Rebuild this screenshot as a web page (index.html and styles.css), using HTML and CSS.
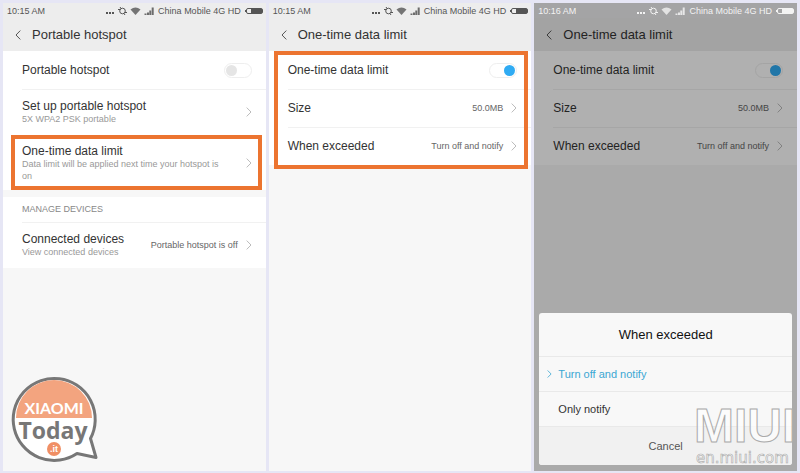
FILE: index.html
```html
<!DOCTYPE html>
<html lang="en">
<head>
  <meta charset="UTF-8" />
  <meta name="viewport" content="width=device-width, initial-scale=1.0" />
  <title>Portable hotspot - One-time data limit</title>
  <link rel="stylesheet" href="styles.css">
</head>
<body>

<!-- shared icons -->
<svg class="defs" width="0" height="0">
  <symbol id="status-icons" viewBox="0 0 48 10">
    <g fill="currentColor">
      <rect x="0" y="6" width="2" height="2"/>
      <rect x="3" y="6" width="2" height="2"/>
      <rect x="6" y="6" width="2" height="2"/>
      <path d="M24.500 3.600Q29.500 -.4 34.500 3.600L29.500 9z" opacity=".8"/>
      <path d="M38.500 9v-1.500h2V9zM41 9V6.500h2V9zM43.300 9V4.500h1.900V9zM45.700 9V1.500h2V9z" opacity=".85"/>
    </g>
    <g fill="none" stroke="currentColor">
      <circle cx="16.500" cy="5" r="2.800"/>
      <path d="M12 3.500h2.500M18.500 6.500h2.500M14 1l1 1.500M19 9l-1-1.500"/>
    </g>
  </symbol>
  <symbol id="battery" viewBox="0 0 18 6">
    <rect x="1.500" y=".5" width="16" height="5" rx="1.500" fill="none" stroke="currentColor"/>
    <rect x="6" y="1" width="11" height="4" fill="currentColor"/>
    <rect x="0" y="2" width="1" height="2" fill="currentColor"/>
  </symbol>
  <symbol id="back" viewBox="0 0 6 10">
    <path d="M5.300 .6L1 5l4.300 4.400" fill="none" stroke="currentColor"/>
  </symbol>
  <symbol id="next" viewBox="0 0 6 10">
    <path d="M.7 .6L5 5 .7 9.400" fill="none" stroke="currentColor"/>
  </symbol>
</svg>

<main class="screens">

  <section class="phone">
    <div class="status">
      <span class="time">10:15 AM</span>
      <svg class="status-icons"><use href="#status-icons"/></svg>
      <span>China Mobile 4G HD</span>
      <svg class="battery"><use href="#battery"/></svg>
    </div>
    <header class="title-bar">
      <button class="back" aria-label="Back"><svg class="arrow"><use href="#back"/></svg></button>
      <h1>Portable hotspot</h1>
    </header>
    <div class="list">
      <div class="row">
        <label class="name" for="hotspot">Portable hotspot</label>
        <input class="switch" type="checkbox" id="hotspot">
      </div>
      <button class="row tall">
        <span class="name">Set up portable hotspot<small>5X WPA2 PSK portable</small></span>
        <svg class="arrow"><use href="#next"/></svg>
      </button>
      <button class="row taller marked">
        <span class="name">One-time data limit<small>Data limit will be applied next time your hotspot is on</small></span>
        <svg class="arrow"><use href="#next"/></svg>
      </button>
    </div>
    <div class="list spaced">
      <h2>MANAGE DEVICES</h2>
      <button class="row tall">
        <span class="name">Connected devices<small>View connected devices</small></span>
        <span class="value">Portable hotspot is off</span>
        <svg class="arrow"><use href="#next"/></svg>
      </button>
    </div>

    <svg class="logo" viewBox="0 0 88 88" role="img" aria-label="Xiaomi Today .it">
      <path d="M80.500 62.500A41 41 0 1 0 67 77.500L86 81.500z" fill="#fff" stroke="#777" stroke-width="3" stroke-linejoin="round"/>
      <path d="M6 42A38 38 0 0 1 82 42z" fill="#f3a47f"/>
      <text class="logo-top" x="44" y="38">XIAOMI</text>
      <text class="logo-name" x="43" y="63">Today</text>
      <circle cx="44" cy="73" r="7" fill="#f08f65"/>
      <text class="logo-it" x="44" y="76">.it</text>
    </svg>
  </section>

  <section class="phone">
    <div class="status">
      <span class="time">10:15 AM</span>
      <svg class="status-icons"><use href="#status-icons"/></svg>
      <span>China Mobile 4G HD</span>
      <svg class="battery"><use href="#battery"/></svg>
    </div>
    <header class="title-bar">
      <button class="back" aria-label="Back"><svg class="arrow"><use href="#back"/></svg></button>
      <h1>One-time data limit</h1>
    </header>
    <div class="list marked">
      <div class="row">
        <label class="name" for="limit">One-time data limit</label>
        <input class="switch" type="checkbox" id="limit" checked>
      </div>
      <button class="row">
        <span class="name">Size</span>
        <span class="value">50.0MB</span>
        <svg class="arrow"><use href="#next"/></svg>
      </button>
      <button class="row">
        <span class="name">When exceeded</span>
        <span class="value">Turn off and notify</span>
        <svg class="arrow"><use href="#next"/></svg>
      </button>
    </div>
  </section>

  <section class="phone dimmed">
    <div class="status">
      <span class="time">10:16 AM</span>
      <svg class="status-icons"><use href="#status-icons"/></svg>
      <span>China Mobile 4G HD</span>
      <svg class="battery"><use href="#battery"/></svg>
    </div>
    <header class="title-bar">
      <button class="back" aria-label="Back"><svg class="arrow"><use href="#back"/></svg></button>
      <h1>One-time data limit</h1>
    </header>
    <div class="list">
      <div class="row">
        <label class="name" for="limit2">One-time data limit</label>
        <input class="switch" type="checkbox" id="limit2" checked>
      </div>
      <button class="row">
        <span class="name">Size</span>
        <span class="value">50.0MB</span>
        <svg class="arrow"><use href="#next"/></svg>
      </button>
      <button class="row">
        <span class="name">When exceeded</span>
        <span class="value">Turn off and notify</span>
        <svg class="arrow"><use href="#next"/></svg>
      </button>
    </div>

    <form class="dialog" role="dialog" aria-labelledby="dialog-title">
      <h2 id="dialog-title">When exceeded</h2>
      <label class="option"><input type="radio" name="exceeded" checked><svg class="tick"><use href="#next"/></svg>Turn off and notify</label>
      <label class="option"><input type="radio" name="exceeded"><svg class="tick"><use href="#next"/></svg>Only notify</label>
      <button type="button" class="cancel">Cancel</button>
    </form>

    <svg class="watermark" viewBox="0 0 104 68">
      <text class="mark-big" x="1" y="41">MIUI</text>
      <text class="mark-small" x="3" y="62">en.miui.com</text>
    </svg>
  </section>

</main>

</body>
</html>
```
FILE: styles.css
```css
* {
  box-sizing: border-box;
}
body {
  margin: 0;
  background: #e6e6f5;
  font-family: "Liberation Sans", Arial, sans-serif;
  font-size: 12px;
  color: #333;
}
h1, h2 {
  margin: 0;
  font-weight: normal;
}
button {
  border: none;
  background: none;
  padding: 0;
  font: inherit;
  color: inherit;
  text-align: left;
  cursor: pointer;
}
.defs {
  position: absolute;
}
.screens {
  display: grid;
  grid-template-columns: repeat(3, 1fr);
  gap: 3px;
  padding: 3px 3px 2px;
  min-height: 100vh;
}
.phone {
  position: relative;
  background: #f7f7f7;
}

/* top of each screen */
.status {
  display: flex;
  align-items: center;
  gap: 4px;
  height: 15px;
  padding: 0 3px 0 4px;
  background: #ededed;
  font-size: 9px;
  color: #555;
}
.time {
  margin-right: auto;
}
.status-icons {
  width: 48px;
  height: 10px;
}
.battery {
  width: 18px;
  height: 6px;
}
.title-bar {
  display: flex;
  align-items: center;
  gap: 11px;
  height: 33px;
  padding: 0 12px;
  background: #ededed;
}
.title-bar h1 {
  font-size: 13px;
}
.arrow {
  display: block;
  flex: none;
  width: 6px;
  height: 10px;
  color: #bbb;
}
.back .arrow {
  color: #555;
}

/* settings rows */
.list {
  position: relative;
  background: #fff;
}
.spaced {
  margin-top: 7px;
}
.row {
  position: relative;
  display: flex;
  align-items: center;
  gap: 8px;
  width: 100%;
  height: 38px;
  padding: 0 14px 0 19px;
}
.row + .row::before,
.list h2 + .row::before {
  content: "";
  position: absolute;
  top: 0;
  left: 19px;
  right: 0;
  border-top: 1px solid #f1f1f1;
}
.row.marked::before {
  display: none;
}
.tall {
  height: 46px;
}
.taller {
  height: 55px;
}
.name {
  flex: 1;
  padding-right: 12px;
  line-height: 14px;
}
.row small {
  display: block;
  font-size: 9px;
  line-height: 12px;
  color: #999;
}
.value {
  font-size: 9px;
  color: #666;
}
.list h2 {
  padding: 0 19px;
  font-size: 9px;
  line-height: 25px;
  color: #888;
}
.switch {
  appearance: none;
  display: flex;
  align-items: center;
  width: 28px;
  height: 15px;
  margin: 0;
  padding: 0 1px;
  border: 1px solid #eee;
  border-radius: 8px;
  background: #fff;
}
.switch::before {
  content: "";
  width: 11px;
  height: 11px;
  border-radius: 50%;
  background: #e5e5e5;
}
.switch:checked {
  justify-content: flex-end;
}
.switch:checked::before {
  background: #2fabf3;
}

/* orange frame round the highlighted settings */
.marked::after {
  content: "";
  position: absolute;
  inset: 0 4px 0 8px;
  border: 4px solid #ec7430;
}
.list.marked::after {
  inset: 0 3px -4px 5px;
}

.logo {
  position: absolute;
  left: 7px;
  bottom: 7px;
  width: 88px;
  height: 88px;
}
.logo text {
  text-anchor: middle;
  font-weight: bold;
  fill: #fff;
}
.logo .logo-top {
  font-family: Lato, sans-serif;
  font-size: 16px;
}
.logo .logo-name {
  font-family: "Open Sans", sans-serif;
  font-size: 23px;
  fill: #777;
}
.logo .logo-it {
  font-family: "Liberation Sans", sans-serif;
  font-size: 9px;
}

/* third screen */
.dimmed::after {
  content: "";
  position: absolute;
  inset: 0;
  background: rgba(0, 0, 0, 0.31);
}
.dimmed .status {
  position: relative;
  z-index: 1;
  background: #a4a4a5;
  color: #f3f3f3;
}
.dialog {
  position: absolute;
  z-index: 1;
  left: 5px;
  right: 5px;
  bottom: 6px;
  overflow: hidden;
  border-radius: 3px;
  background: #f8f8f8;
}
.dialog h2 {
  font-size: 13px;
  line-height: 43px;
  text-align: center;
  color: #111;
}
.option {
  display: flex;
  align-items: center;
  gap: 6px;
  height: 35px;
  padding: 0 8px;
  border-top: 1px solid #e9e9e9;
  font-size: 11px;
  cursor: pointer;
}
.option input {
  position: absolute;
  opacity: 0;
}
.tick {
  width: 5px;
  height: 8px;
  visibility: hidden;
}
.option:has(:checked) {
  color: #3ba7d3;
}
:checked + .tick {
  visibility: visible;
}
.cancel {
  display: block;
  width: 100%;
  height: 39px;
  border-top: 1px solid #e9e9e9;
  background: #f1f1f1;
  font-size: 11px;
  text-align: center;
  color: #555;
}
.watermark {
  position: absolute;
  z-index: 2;
  right: 0;
  bottom: 2px;
  width: 104px;
  height: 68px;
  pointer-events: none;
}
.watermark text {
  fill: rgba(255, 255, 255, 0.7);
  stroke: #aaa;
  stroke-width: 1px;
}
.watermark .mark-big {
  font-family: "Liberation Sans", sans-serif;
  font-size: 48px;
  font-weight: bold;
}
.watermark .mark-small {
  font-family: "DejaVu Sans", sans-serif;
  font-size: 15px;
  stroke-width: 0.6px;
}
```
